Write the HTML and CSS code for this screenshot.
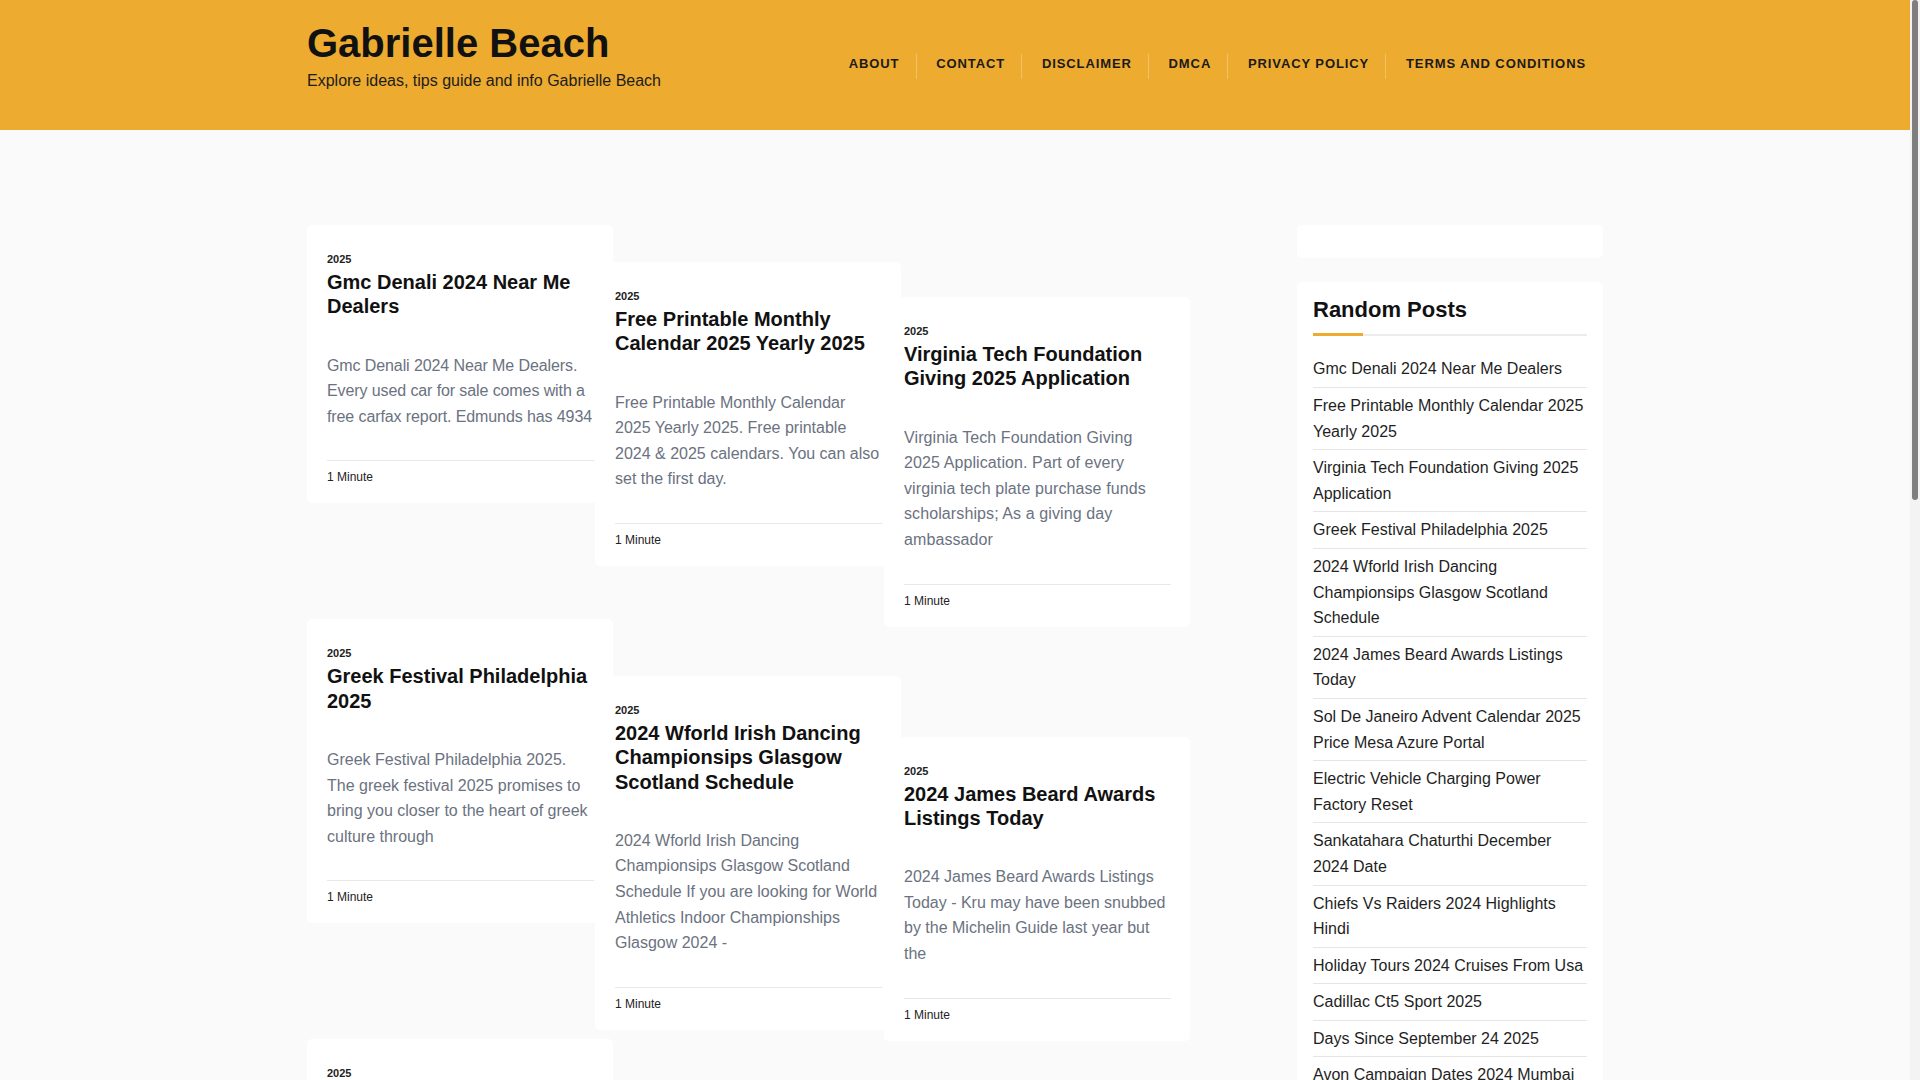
FILE: index.html
```html
<!DOCTYPE html>
<html lang="en">
<head>
<meta charset="utf-8">
<title>Gabrielle Beach</title>
<link rel="stylesheet" href="styles.css">
</head>
<body>
<header class="site-header">
  <div class="container header-inner">
    <div class="branding">
      <h1 class="site-title">Gabrielle Beach</h1>
      <p class="site-desc">Explore ideas, tips guide and info Gabrielle Beach</p>
    </div>
    <nav class="main-nav">
      <ul class="menu">
        <li><a href="#">About</a></li>
        <li><a href="#">Contact</a></li>
        <li><a href="#">Disclaimer</a></li>
        <li><a href="#">DMCA</a></li>
        <li><a href="#">Privacy Policy</a></li>
        <li class="last"><a href="#">Terms and Conditions</a></li>
      </ul>
    </nav>
  </div>
</header>

<div class="container site-body">
  <main class="content">
    <div class="grid">
      <div class="col col-1">
        <article class="card">
          <div class="card-cat">2025</div>
          <h2 class="card-title">Gmc Denali 2024 Near Me Dealers</h2>
          <p class="card-excerpt card-excerpt-tight">Gmc Denali 2024 Near Me Dealers. Every used car for sale comes with a free carfax report. Edmunds has 4934</p>
          <div class="card-meta">1 Minute</div>
        </article>
        <article class="card">
          <div class="card-cat">2025</div>
          <h2 class="card-title">Greek Festival Philadelphia 2025</h2>
          <p class="card-excerpt">Greek Festival Philadelphia 2025. The greek festival 2025 promises to bring you closer to the heart of greek culture through</p>
          <div class="card-meta">1 Minute</div>
        </article>
        <article class="card">
          <div class="card-cat">2025</div>
          <h2 class="card-title">Sol De Janeiro Advent Calendar 2025 Price Mesa Azure Portal</h2>
          <p class="card-excerpt">Sol De Janeiro Advent Calendar 2025 Price Mesa Azure Portal. Discover the full list of goodies inside this year</p>
          <div class="card-meta">1 Minute</div>
        </article>
        <article class="card">
          <div class="card-cat">2025</div>
          <h2 class="card-title">Chiefs Vs Raiders 2024 Highlights Hindi</h2>
          <p class="card-excerpt">Chiefs Vs Raiders 2024 Highlights Hindi. Watch the full game recap and the best plays of the</p>
          <div class="card-meta">1 Minute</div>
        </article>
      </div>
      <div class="col col-2">
        <article class="card">
          <div class="card-cat">2025</div>
          <h2 class="card-title">Free Printable Monthly Calendar 2025 Yearly 2025</h2>
          <p class="card-excerpt">Free Printable Monthly Calendar 2025 Yearly 2025. Free printable 2024 &amp; 2025 calendars. You can also set the first day.</p>
          <div class="card-meta">1 Minute</div>
        </article>
        <article class="card">
          <div class="card-cat">2025</div>
          <h2 class="card-title">2024 Wforld Irish Dancing Championsips Glasgow Scotland Schedule</h2>
          <p class="card-excerpt">2024 Wforld Irish Dancing Championsips Glasgow Scotland Schedule If you are looking for World Athletics Indoor Championships Glasgow 2024 -</p>
          <div class="card-meta">1 Minute</div>
        </article>
        <article class="card">
          <div class="card-cat">2025</div>
          <h2 class="card-title">Electric Vehicle Charging Power Factory Reset</h2>
          <p class="card-excerpt">Electric Vehicle Charging Power Factory Reset. Learn how to restore your home charger to its default</p>
          <div class="card-meta">1 Minute</div>
        </article>
        <article class="card">
          <div class="card-cat">2025</div>
          <h2 class="card-title">Holiday Tours 2024 Cruises From Usa</h2>
          <p class="card-excerpt">Holiday Tours 2024 Cruises From Usa. Find the best holiday cruise deals departing from</p>
          <div class="card-meta">1 Minute</div>
        </article>
      </div>
      <div class="col col-3">
        <article class="card">
          <div class="card-cat">2025</div>
          <h2 class="card-title">Virginia Tech Foundation Giving 2025 Application</h2>
          <p class="card-excerpt card-excerpt-loose">Virginia Tech Foundation Giving 2025 Application. Part of every virginia tech plate purchase funds scholarships; As a giving day ambassador</p>
          <div class="card-meta">1 Minute</div>
        </article>
        <article class="card">
          <div class="card-cat">2025</div>
          <h2 class="card-title">2024 James Beard Awards Listings Today</h2>
          <p class="card-excerpt">2024 James Beard Awards Listings Today - Kru may have been snubbed by the Michelin Guide last year but the</p>
          <div class="card-meta">1 Minute</div>
        </article>
        <article class="card">
          <div class="card-cat">2025</div>
          <h2 class="card-title">Sankatahara Chaturthi December 2024 Date</h2>
          <p class="card-excerpt">Sankatahara Chaturthi December 2024 Date. Check the moonrise timing and puja muhurat for this</p>
          <div class="card-meta">1 Minute</div>
        </article>
        <article class="card">
          <div class="card-cat">2025</div>
          <h2 class="card-title">Cadillac Ct5 Sport 2025</h2>
          <p class="card-excerpt">Cadillac Ct5 Sport 2025. The sport sedan returns with a refreshed design and more</p>
          <div class="card-meta">1 Minute</div>
        </article>
      </div>
    </div>
  </main>

  <aside class="sidebar">
    <div class="widget widget-empty"></div>
    <div class="widget">
      <h3 class="widget-title">Random Posts</h3>
      <div class="widget-rule"><span class="rule-accent"></span><span class="rule-line"></span></div>
      <ul class="post-list">
        <li><a href="#">Gmc Denali 2024 Near Me Dealers</a></li>
        <li><a href="#">Free Printable Monthly Calendar 2025 Yearly 2025</a></li>
        <li><a href="#">Virginia Tech Foundation Giving 2025 Application</a></li>
        <li><a href="#">Greek Festival Philadelphia 2025</a></li>
        <li><a href="#">2024 Wforld Irish Dancing Championsips Glasgow Scotland Schedule</a></li>
        <li><a href="#">2024 James Beard Awards Listings Today</a></li>
        <li><a href="#">Sol De Janeiro Advent Calendar 2025 Price Mesa Azure Portal</a></li>
        <li><a href="#">Electric Vehicle Charging Power Factory Reset</a></li>
        <li><a href="#">Sankatahara Chaturthi December 2024 Date</a></li>
        <li><a href="#">Chiefs Vs Raiders 2024 Highlights Hindi</a></li>
        <li><a href="#">Holiday Tours 2024 Cruises From Usa</a></li>
        <li><a href="#">Cadillac Ct5 Sport 2025</a></li>
        <li><a href="#">Days Since September 24 2025</a></li>
        <li><a href="#">Avon Campaign Dates 2024 Mumbai</a></li>
        <li><a href="#">Best Time To Visit Japan 2025</a></li>
        <li><a href="#">Nfl Draft 2025 Mock Picks</a></li>
      </ul>
    </div>
  </aside>
</div>

<div class="fake-scrollbar"><div class="fake-thumb"></div></div>
</body>
</html>
```

FILE: styles.css
```css
* { box-sizing: border-box; }

html, body {
  margin: 0;
  padding: 0;
}

body {
  background: #fafafa;
  font-family: "Liberation Sans", Arial, sans-serif;
  color: #222;
  margin-right: 10px;
}

a { color: inherit; text-decoration: none; }

.container {
  width: 1296px;
  margin: 0 auto;
}

/* Header */
.site-header {
  background: #edab2f;
  height: 130px;
}

.header-inner {
  display: flex;
  justify-content: space-between;
  align-items: flex-start;
}

.branding {
  padding-top: 19px;
}

.site-title {
  margin: 0;
  font-size: 40px;
  line-height: 48px;
  font-weight: 700;
  color: #111;
}

.site-desc {
  margin: 2px 0 0;
  font-size: 16px;
  line-height: 24px;
  color: #1c1c1c;
}

.main-nav {
  margin-top: 54px;
}

.menu {
  list-style: none;
  margin: 0;
  padding: 0;
  display: flex;
}

.menu li {
  height: 25px;
}

.menu li + li {
  border-left: 1px solid rgba(255, 255, 255, 0.28);
}

.menu a {
  display: block;
  padding: 2px 16.3px 8px 19.5px;
  font-size: 13px;
  line-height: 15px;
  font-weight: 700;
  letter-spacing: 0.9px;
  text-transform: uppercase;
  color: #1a1a1a;
}

.menu li.last a {
  padding-right: 17px;
}

/* Body */
.site-body {
  display: flex;
  justify-content: space-between;
  align-items: flex-start;
  padding-top: 95px;
}

.content {
  width: 883px;
}

.grid {
  display: grid;
  grid-template-columns: 288px 289px 306px;
  align-items: start;
}

.col {
  display: flex;
  flex-direction: column;
}

.col-1 { gap: 116px; }
.col-2 { gap: 110px; padding-top: 37px; }
.col-3 { gap: 110px; padding-top: 72px; }

.card {
  width: 306px;
  background: #fff;
  border-radius: 5px;
  padding: 26px 19px 17px 20px;
}

.card-cat {
  font-size: 11px;
  line-height: 16.5px;
  font-weight: 700;
  color: #222;
  margin-bottom: 2.5px;
}

.card-title {
  margin: 0 0 34px;
  font-size: 20px;
  line-height: 24.3px;
  font-weight: 700;
  color: #111;
}

.card-excerpt {
  margin: 0 0 31px;
  font-size: 16px;
  line-height: 25.6px;
  color: #6b7280;
}

.card-excerpt-tight {
  letter-spacing: -0.1px;
}

.card-excerpt-loose {
  letter-spacing: 0.1px;
}

.card-meta {
  border-top: 1px solid #e8e8e8;
  padding-top: 7px;
  font-size: 12px;
  line-height: 18px;
  color: #222;
}

/* Sidebar */
.sidebar {
  width: 306px;
  display: flex;
  flex-direction: column;
  gap: 24px;
}

.widget {
  background: #fff;
  border-radius: 5px;
  padding: 15px 16px 10px;
}

.widget-empty {
  height: 33px;
  padding: 0;
}

.widget-title {
  margin: 0 0 10px;
  font-size: 22px;
  line-height: 26.4px;
  font-weight: 700;
  color: #111;
}

.widget-rule {
  display: flex;
  align-items: flex-end;
  height: 3px;
  margin-bottom: 15px;
}

.rule-accent {
  width: 50px;
  height: 3px;
  background: #edab2f;
}

.rule-line {
  flex: 1;
  height: 2px;
  background: #ececec;
}

.post-list {
  list-style: none;
  margin: 0;
  padding: 0;
}

.post-list li {
  padding: 5px 0;
  border-bottom: 1px solid #e6e6e6;
  font-size: 16px;
  line-height: 25.6px;
  color: #1f1f1f;
}

/* Scrollbar gutter drawn over the page edge */
.fake-scrollbar {
  position: fixed;
  top: 0;
  right: 0;
  width: 10px;
  height: 100%;
  background: #f3f3f3;
}

.fake-thumb {
  width: 6px;
  height: 500px;
  margin-left: 2px;
  border-radius: 3px;
  background: #7f7f7f;
}
```
